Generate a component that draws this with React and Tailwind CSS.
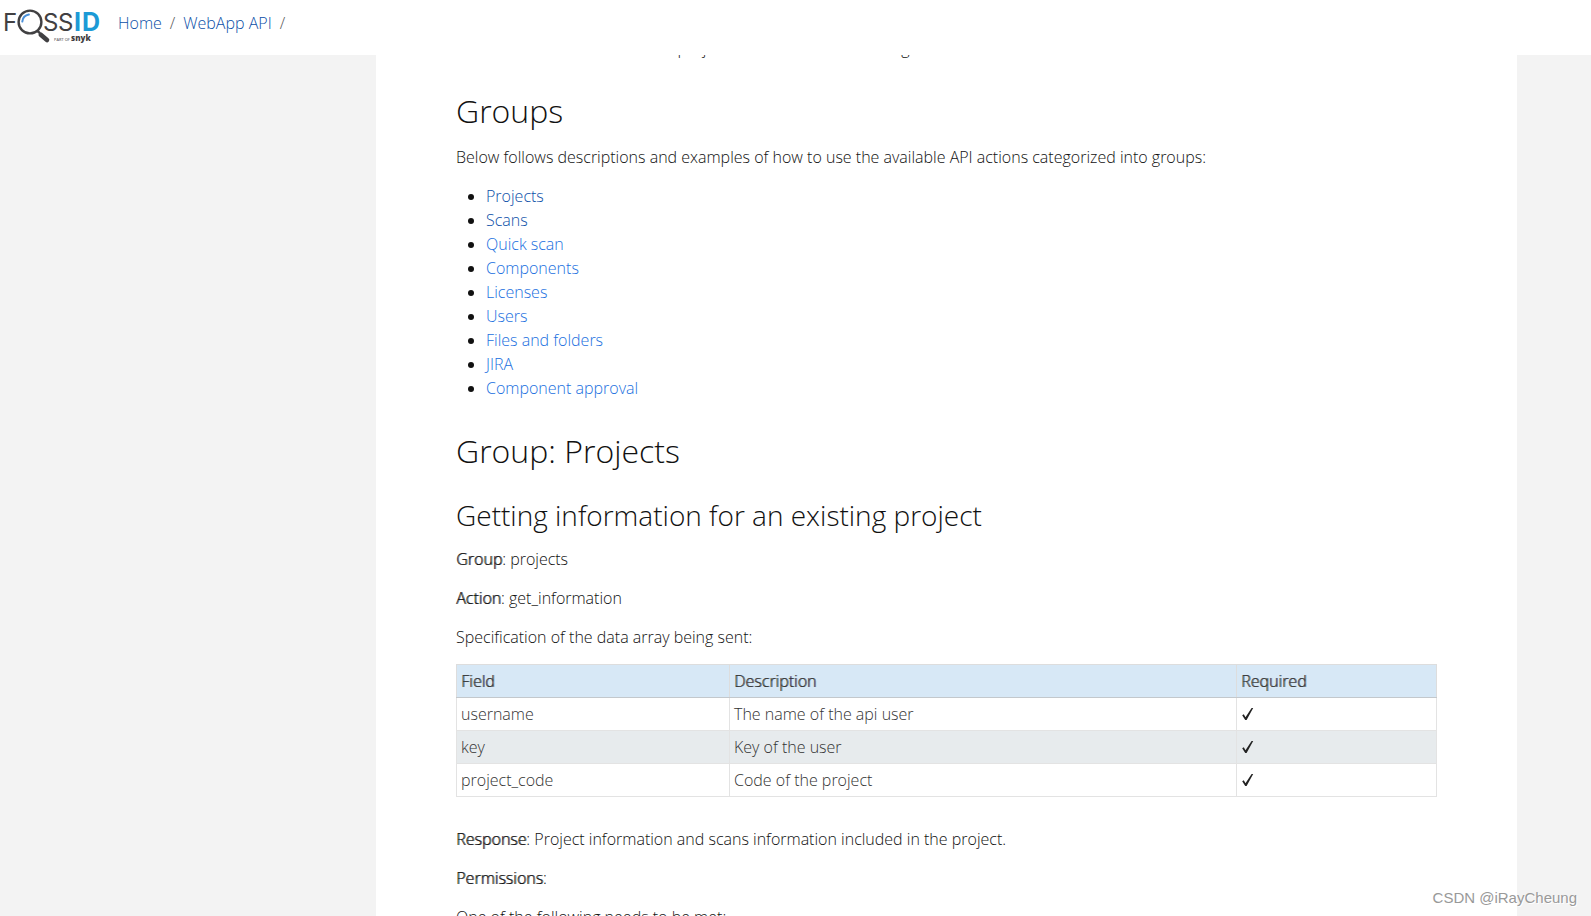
const groups = [
  { name: 'Projects', visited: true },
  { name: 'Scans', visited: true },
  { name: 'Quick scan' },
  { name: 'Components' },
  { name: 'Licenses' },
  { name: 'Users' },
  { name: 'Files and folders' },
  { name: 'JIRA' },
  { name: 'Component approval' }
];

const fields = [
  { field: 'username', description: 'The name of the api user' },
  { field: 'key', description: 'Key of the user' },
  { field: 'project_code', description: 'Code of the project' }
];

const Logo = () => (
  <svg viewBox="0 0 102 44" className="h-11 w-[102px]" role="img" aria-label="FOSSID">
    {/* Magnifier in place of the O */}
    <circle cx="30" cy="22" r="11.4" fill="none" stroke="#414042" strokeWidth="2.4" />
    <path d="M22.3 21.6a8 8 0 0 1 6.6-7" fill="none" stroke="#4a90d9" strokeWidth="2" strokeLinecap="round" />
    <path d="M37.5 31l2.4 2.2" stroke="#414042" strokeWidth="2.5" />
    <path d="M40.8 34.8l6.2 5.2" stroke="#414042" strokeWidth="4.6" strokeLinecap="round" />
    <g fontFamily="Inter, sans-serif" fontWeight="400" fill="#414042">
      <text x="3" y="31" fontSize="24">F</text>
      <text x="43" y="31" fontSize="24">S</text>
      <text x="58" y="31" fontSize="24">S</text>
      <text x="74" y="31" fontSize="25" fontWeight="700" fill="#1c9ad6">I</text>
      <text x="82" y="31" fontSize="25" fontWeight="700" fill="#1c9ad6">D</text>
    </g>
    <g fontFamily="'Open Sans', sans-serif" fill="#414042">
      <text x="54" y="41" fontSize="4" fontWeight="400">PART OF</text>
      <text x="71" y="41" fontSize="8" fontWeight="800">snyk</text>
    </g>
  </svg>
);

const Header = () => (
  <header className="relative z-10 flex h-[55px] shrink-0 items-start bg-white">
    <a href="#home" className="mr-4">
      <Logo />
    </a>
    <nav aria-label="Breadcrumb" className="flex gap-2 pt-[11px] text-[#555]">
      <a href="#home" className="text-[#0b4fa8]">Home</a>
      <span>/</span>
      <a href="#webapp-api" className="text-[#0b4fa8]">WebApp API</a>
      <span>/</span>
    </nav>
  </header>
);

const Label = ({ children }) => (
  <strong className="font-light [text-shadow:1px_0_0_#111111bb]">{children}</strong>
);

const FieldsTable = () => (
  <table className="mb-[30px] w-full table-fixed border-collapse text-left text-[#333]">
    <thead className="[text-shadow:1px_0_0_#333333bb]">
      <tr className="bg-[#d7e8f6]">
        <th className="w-[273px] border border-[#ddd] border-b-[#c3c8cc] px-1 py-1 font-light">Field</th>
        <th className="border border-[#ddd] border-b-[#c3c8cc] px-1 py-1 font-light">Description</th>
        <th className="w-[200px] border border-[#ddd] border-b-[#c3c8cc] px-1 py-1 font-light">Required</th>
      </tr>
    </thead>
    <tbody>
      {fields.map((row) => (
        <tr key={row.field} className="even:bg-[#e7ebed]">
          <td className="border border-[#e3e3e3] px-1 py-1">{row.field}</td>
          <td className="border border-[#e3e3e3] px-1 py-1">{row.description}</td>
          <td className="h-[33px] border border-[#e3e3e3] px-1 py-1">
            <svg viewBox="0 0 14 14" className="size-[14px]" role="img" aria-label="Yes">
              <path d="M1.2 8.2l1.6-.9 1.7 2.9L10.6 1l1.6 0L5.6 13 4.2 13z" fill="#222" />
            </svg>
          </td>
        </tr>
      ))}
    </tbody>
  </table>
);

const App = () => {
  return (
    <div className="flex h-screen flex-col overflow-hidden bg-[#f3f3f3] font-['Open_Sans',sans-serif] text-base leading-6 font-light text-[#111]">
      <Header />

      <main className="mr-[74px] ml-[376px] min-h-0 flex-1 bg-white px-20">
        <p className="-mt-[19px] mb-[31px]">Here is shown how to create a project and edit a scan including the results.</p>

        <h1 className="mb-[14px] text-[32px] leading-10">Groups</h1>
        <p className="mb-[15px]">
          Below follows descriptions and examples of how to use the available API actions categorized into groups:
        </p>
        <ul className="mb-[31px] list-disc pl-[30px]">
          {groups.map((group) => (
            <li key={group.name}>
              <a href={`#${group.name}`} className={group.visited ? 'text-[#0b4fa8]' : 'text-[#1a6fe0]'}>
                {group.name}
              </a>
            </li>
          ))}
        </ul>

        <h1 className="mb-[27px] text-[32px] leading-10">Group: Projects</h1>
        <h2 className="mb-[15px] text-[28px] leading-[34px]">Getting information for an existing project</h2>
        <p className="mb-[15px]">
          <Label>Group</Label>: projects
        </p>
        <p className="mb-[15px]">
          <Label>Action</Label>: get_information
        </p>
        <p className="mb-[15px]">Specification of the data array being sent:</p>

        <FieldsTable />

        <p className="mb-[15px]">
          <Label>Response</Label>: Project information and scans information included in the project.
        </p>
        <p className="mb-[15px]">
          <Label>Permissions</Label>:
        </p>
        <p>One of the following needs to be met:</p>
      </main>

      <div className="absolute right-[14px] bottom-[6px] font-['Liberation_Sans',sans-serif] text-[15px] font-normal text-[#999] [text-shadow:1px_1px_0_#fff]">
        CSDN @iRayCheung
      </div>
    </div>
  );
};

export default App;
